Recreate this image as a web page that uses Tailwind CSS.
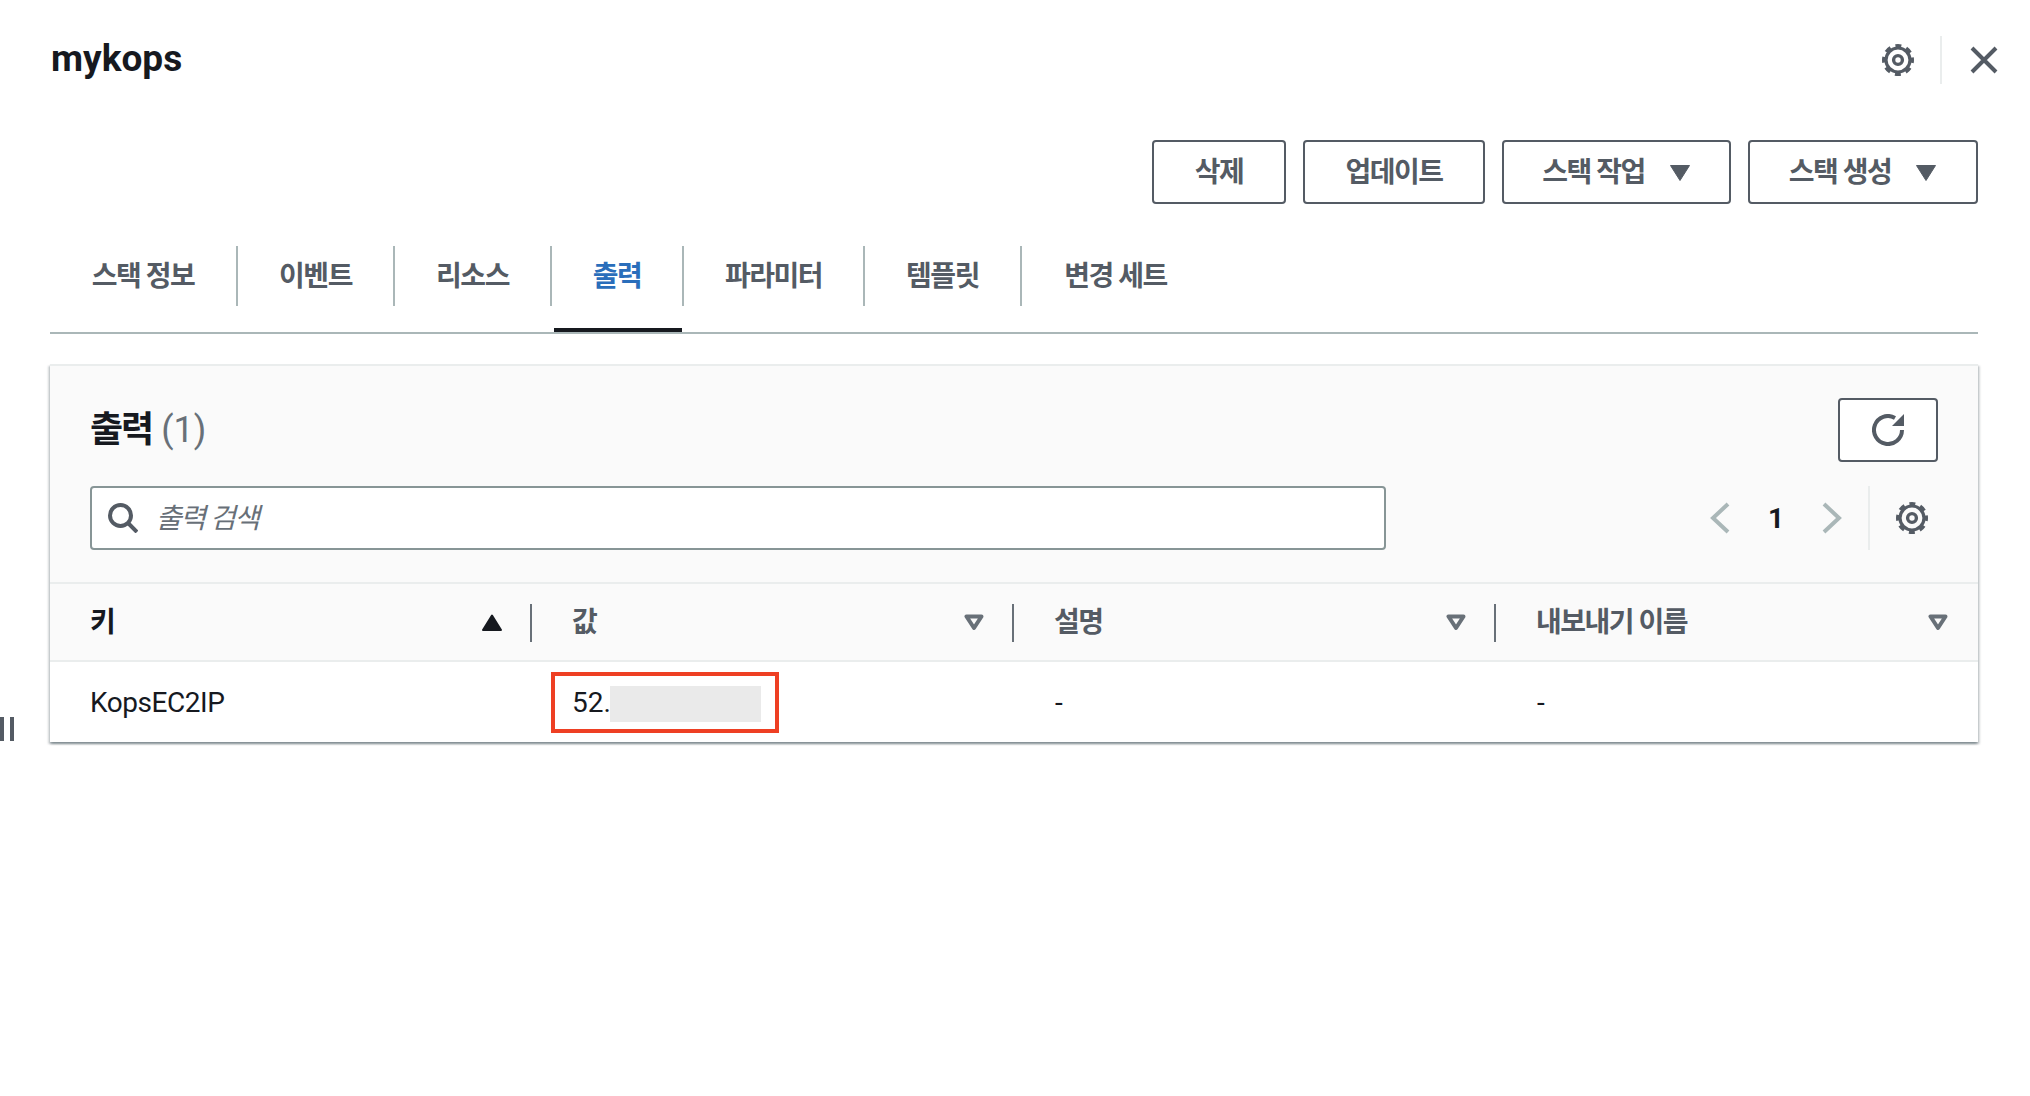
<!DOCTYPE html>
<html lang="ko">
<head>
    <meta charset="UTF-8">
    <meta name="viewport" content="width=device-width, initial-scale=1.0">
    <title>mykops</title>
    <script src="https://cdn.jsdelivr.net/npm/@tailwindcss/browser@4"></script>
</head>
<body class="bg-white font-['Roboto','Noto_Sans_CJK_KR',sans-serif] text-[#16191f]">
    <div class="relative h-[1096px] w-[2030px] overflow-hidden pl-[50px] pr-[52px]">
        <!-- sliver of the page behind the panel -->
        <div class="absolute left-0 top-[717px] flex gap-[6px]">
            <div class="h-[24px] w-[4px] bg-[#545b64]"></div>
            <div class="h-[24px] w-[4px] bg-[#545b64]"></div>
        </div>

        <div class="flex h-[140px] items-start justify-between">
            <h1 class="mt-[34px] pl-px text-[37px] leading-[50px] font-bold">mykops</h1>
            <div class="mr-[-20px] mt-[36px] flex h-[48px] items-center">
                <svg class="h-[32px] w-[32px] text-[#545b64]" viewBox="0 0 16 16" fill="none" stroke="currentColor">
                    <circle cx="8" cy="8" r="6" stroke-width="1.6"/>
                    <circle cx="8" cy="8" r="7.2" stroke-width="1.6" stroke-dasharray="3 2.65" stroke-dashoffset="1.5"/>
                    <circle cx="8" cy="8" r="2.2" stroke-width="1.7"/>
                </svg>
                <div class="ml-[26px] h-[48px] w-[2px] bg-[#eaeded]"></div>
                <svg class="ml-[28px] h-[28px] w-[28px] text-[#545b64]" viewBox="0 0 28 28" fill="none" stroke="currentColor" stroke-width="4">
                    <path d="M2 2l24 24M26 2L2 26"/>
                </svg>
            </div>
        </div>

        <div class="flex justify-end gap-[17px] text-[28px] font-bold tracking-[-1.5px] text-[#545b64]">
            <button class="flex h-[64px] w-[134px] items-center justify-center rounded-[4px] border-2 border-[#545b64] bg-white pt-[2px]">삭제</button>
            <button class="flex h-[64px] w-[182px] items-center justify-center rounded-[4px] border-2 border-[#545b64] bg-white pt-[2px]">업데이트</button>
            <button class="flex h-[64px] w-[229px] items-center justify-center gap-[24px] rounded-[4px] border-2 border-[#545b64] bg-white pt-[2px]">스택 작업
                <svg class="h-[18px] w-[22px]" viewBox="0 0 22 18" fill="currentColor" stroke="currentColor" stroke-linejoin="round"><path d="M1.5 1.5h19L11 16.5z"/></svg>
            </button>
            <button class="flex h-[64px] w-[230px] items-center justify-center gap-[24px] rounded-[4px] border-2 border-[#545b64] bg-white pt-[2px]">스택 생성
                <svg class="h-[18px] w-[22px]" viewBox="0 0 22 18" fill="currentColor" stroke="currentColor" stroke-linejoin="round"><path d="M1.5 1.5h19L11 16.5z"/></svg>
            </button>
        </div>

        <div class="mt-[42px] flex h-[88px] items-start border-b-2 border-[#aab7b8] text-[28px] font-bold tracking-[-1.5px] text-[#545b64]">
            <div class="flex h-[60px] w-[188px] items-center justify-center border-r-2 border-[#aab7b8] pt-[2px]">스택 정보</div>
            <div class="flex h-[60px] w-[157px] items-center justify-center border-r-2 border-[#aab7b8] pt-[2px]">이벤트</div>
            <div class="flex h-[60px] w-[157px] items-center justify-center border-r-2 border-[#aab7b8] pt-[2px]">리소스</div>
            <div class="relative flex h-[60px] w-[132px] items-center justify-center border-r-2 border-[#aab7b8] pt-[2px] text-[#2a6ebb]">출력
                <div class="absolute left-[2px] top-[82px] h-[4px] w-[128px] bg-[#16191f]"></div>
            </div>
            <div class="flex h-[60px] w-[181px] items-center justify-center border-r-2 border-[#aab7b8] pt-[2px]">파라미터</div>
            <div class="flex h-[60px] w-[157px] items-center justify-center border-r-2 border-[#aab7b8] pt-[2px]">템플릿</div>
            <div class="flex h-[60px] w-[187px] items-center justify-center pt-[2px]">변경 세트</div>
        </div>

        <div class="mt-[30px] border-t-2 border-[#eaeded] shadow-[0_2px_2px_0_rgba(0,28,36,0.3),2px_2px_2px_0_rgba(0,28,36,0.15),-2px_2px_2px_0_rgba(0,28,36,0.15)]">
            <div class="border-b-2 border-[#eaeded] bg-[#fafafa] px-[40px] pb-[32px] pt-[32px]">
                <div class="flex h-[64px] items-center justify-between">
                    <h2 class="text-[36px] leading-[50px] font-bold"><span class="tracking-[-2px]">출력</span> <span class="font-normal text-[#687078]">(1)</span></h2>
                    <button class="flex h-[64px] w-[100px] items-center justify-center rounded-[4px] border-2 border-[#545b64] bg-white">
                        <svg class="h-[32px] w-[32px] text-[#545b64]" viewBox="0 0 32 32" fill="none" stroke="currentColor" stroke-width="4">
                            <path d="M30 16A14 14 0 1 1 23 3.9"/>
                            <path d="M32 0v12H20z" fill="currentColor" stroke="none"/>
                        </svg>
                    </button>
                </div>
                <div class="mt-[24px] flex h-[64px] items-center">
                    <div class="flex h-[64px] w-[1296px] items-center rounded-[4px] border-2 border-[#879596] bg-white pl-[16px]">
                        <svg class="h-[30px] w-[30px] text-[#545b64]" viewBox="0 0 30 30" fill="none" stroke="currentColor" stroke-width="4">
                            <circle cx="12.5" cy="12.5" r="10.5"/>
                            <path d="M20 20l9 9"/>
                        </svg>
                        <span class="ml-[18px] pt-[2px] text-[28px] italic tracking-[-1.5px] text-[#687078]">출력 검색</span>
                    </div>
                    <svg class="ml-[324px] h-[32px] w-[20px] text-[#aab7b8]" viewBox="0 0 20 32" fill="none" stroke="currentColor" stroke-width="4">
                        <path d="M18 2L3 16l15 14"/>
                    </svg>
                    <span class="w-[92px] pt-px text-center text-[28px] font-bold">1</span>
                    <svg class="h-[32px] w-[20px] text-[#aab7b8]" viewBox="0 0 20 32" fill="none" stroke="currentColor" stroke-width="4">
                        <path d="M2 2l15 14L2 30"/>
                    </svg>
                    <div class="ml-[26px] h-[64px] w-[2px] bg-[#eaeded]"></div>
                    <svg class="ml-[26px] h-[32px] w-[32px] text-[#545b64]" viewBox="0 0 16 16" fill="none" stroke="currentColor">
                        <circle cx="8" cy="8" r="6" stroke-width="1.6"/>
                        <circle cx="8" cy="8" r="7.2" stroke-width="1.6" stroke-dasharray="3 2.65" stroke-dashoffset="1.5"/>
                        <circle cx="8" cy="8" r="2.2" stroke-width="1.7"/>
                    </svg>
                </div>
            </div>

            <div class="grid h-[78px] grid-cols-[480px_482px_482px_484px] border-b-2 border-[#eaeded] bg-[#fafafa] text-[28px] font-bold tracking-[-1.5px] text-[#545b64]">
                <div class="flex items-center justify-between pl-[40px] pr-[28px]">
                    <span class="pt-[2px] text-[#16191f]">키</span>
                    <svg class="h-[17px] w-[20px] text-[#16191f]" viewBox="0 0 20 17" fill="currentColor" stroke="currentColor" stroke-width="2" stroke-linejoin="round"><path d="M10 1.5l9 14.5H1z"/></svg>
                </div>
                <div class="relative flex items-center justify-between pl-[42px] pr-[28px]">
                    <div class="absolute left-0 top-[20px] h-[38px] w-[2px] bg-[#687078]"></div>
                    <span class="pt-[2px]">값</span>
                    <svg class="h-[17px] w-[20px] text-[#687078]" viewBox="0 0 20 17" fill="none" stroke="currentColor" stroke-width="4" stroke-linejoin="round"><path d="M2.5 2.5h15L10 14z"/></svg>
                </div>
                <div class="relative flex items-center justify-between pl-[42px] pr-[28px]">
                    <div class="absolute left-0 top-[20px] h-[38px] w-[2px] bg-[#687078]"></div>
                    <span class="pt-[2px]">설명</span>
                    <svg class="h-[17px] w-[20px] text-[#687078]" viewBox="0 0 20 17" fill="none" stroke="currentColor" stroke-width="4" stroke-linejoin="round"><path d="M2.5 2.5h15L10 14z"/></svg>
                </div>
                <div class="relative flex items-center justify-between pl-[42px] pr-[30px]">
                    <div class="absolute left-0 top-[20px] h-[38px] w-[2px] bg-[#687078]"></div>
                    <span class="pt-[2px]">내보내기 이름</span>
                    <svg class="h-[17px] w-[20px] text-[#687078]" viewBox="0 0 20 17" fill="none" stroke="currentColor" stroke-width="4" stroke-linejoin="round"><path d="M2.5 2.5h15L10 14z"/></svg>
                </div>
            </div>

            <div class="grid h-[80px] grid-cols-[480px_482px_482px_484px] bg-white pt-[2px] text-[28px] text-[#16191f]">
                <div class="flex items-center pl-[40px] tracking-[-0.45px]">KopsEC2IP</div>
                <div class="relative flex items-center pl-[42px]">
                    52.
                    <div class="absolute left-[80px] top-[22px] h-[36px] w-[151px] bg-[#eaeaea]"></div>
                    <div class="absolute left-[21px] top-[8px] h-[61px] w-[228px] border-4 border-[#ee3f23]"></div>
                </div>
                <div class="flex items-center pl-[43px]">-</div>
                <div class="flex items-center pl-[43px]">-</div>
            </div>
        </div>
    </div>
</body>
</html>
